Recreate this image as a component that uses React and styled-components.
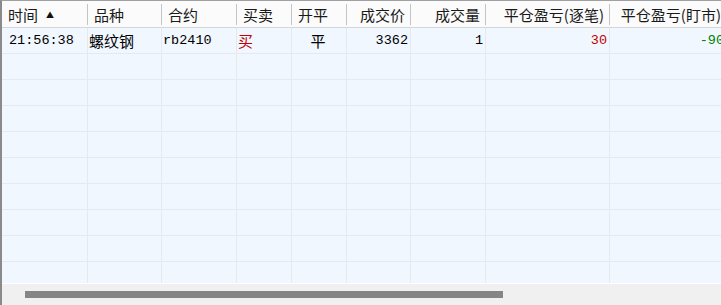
import styled, { createGlobalStyle } from 'styled-components';

const GlobalStyle = createGlobalStyle`
  html, body {
    margin: 0;
    padding: 0;
    background: #ffffff;
  }
  body {
    font-family: "Noto Sans CJK SC", "Noto Sans", sans-serif;
  }
`;

const columns = [
  { key: 'time', title: '时间', width: 86, headAlign: 'left', cellAlign: 'left', pad: 7, sorted: true },
  { key: 'name', title: '品种', width: 74, headAlign: 'left', cellAlign: 'left', pad: 1 },
  { key: 'code', title: '合约', width: 75, headAlign: 'left', cellAlign: 'left', pad: 1 },
  { key: 'side', title: '买卖', width: 55, headAlign: 'left', cellAlign: 'left', pad: 1 },
  { key: 'open', title: '开平', width: 55, headAlign: 'left', cellAlign: 'center', pad: 0 },
  { key: 'price', title: '成交价', width: 64, headAlign: 'right', cellAlign: 'right', pad: 0 },
  { key: 'qty', title: '成交量', width: 75, headAlign: 'right', cellAlign: 'right', pad: 0 },
  { key: 'pnl', title: '平仓盈亏(逐笔)', width: 124, headAlign: 'right', cellAlign: 'right', pad: 0 },
  { key: 'pnlDay', title: '平仓盈亏(盯市)', width: 117, headAlign: 'right', cellAlign: 'right', pad: 0 },
];

const trades = [
  {
    time: '21:56:38',
    name: '螺纹钢',
    code: 'rb2410',
    side: '买',
    open: '平',
    price: '3362',
    qty: '1',
    pnl: '30',
    pnlDay: '-90',
  },
];

const EMPTY_ROWS = 9;

const toneOf = (key, value) => {
  if (key === 'side') return value === '买' ? 'up' : 'down';
  if (key === 'pnl' || key === 'pnlDay') {
    const n = Number(value);
    if (n > 0) return 'up';
    if (n < 0) return 'down';
  }
  return 'plain';
};

const isLatin = (key) => ['time', 'code', 'price', 'qty', 'pnl', 'pnlDay'].includes(key);

export default function App() {
  return (
    <>
      <GlobalStyle />
      <Frame>
        <Grid>
          <HeaderRow>
            {columns.map((col) => (
              <HeadCell key={col.key} $width={col.width} $align={col.headAlign}>
                {col.title}
                {col.sorted && <SortMark>▲</SortMark>}
              </HeadCell>
            ))}
          </HeaderRow>
          <Body>
            {trades.map((trade, i) => (
              <Row key={i}>
                {columns.map((col) => (
                  <Cell
                    key={col.key}
                    $width={col.width}
                    $align={col.cellAlign}
                    $pad={col.pad}
                    $tone={toneOf(col.key, trade[col.key])}
                    $latin={isLatin(col.key)}
                  >
                    {trade[col.key]}
                  </Cell>
                ))}
              </Row>
            ))}
            {Array.from({ length: EMPTY_ROWS }).map((_, i) => (
              <Row key={`e${i}`}>
                {columns.map((col) => (
                  <Cell key={col.key} $width={col.width} />
                ))}
              </Row>
            ))}
          </Body>
        </Grid>
        <ScrollBar>
          <Thumb />
        </ScrollBar>
      </Frame>
    </>
  );
}

const Frame = styled.div`
  width: 721px;
  height: 305px;
  display: flex;
  flex-direction: column;
  border-left: 2px solid #8a8a8a;
  border-top: 1px solid #a0a0a0;
  box-sizing: border-box;
  overflow: hidden;
  background: #f0f7ff;
`;

const Grid = styled.div`
  display: flex;
  flex-direction: column;
  height: 282px;
  overflow: hidden;
`;

const HeaderRow = styled.div`
  display: flex;
  height: 26px;
  flex: none;
  background: #fbfbfb;
  border-bottom: 1px solid #d6d6d6;
`;

const HeadCell = styled.div`
  flex: none;
  width: ${({ $width }) => $width}px;
  box-sizing: border-box;
  display: flex;
  align-items: center;
  justify-content: ${({ $align }) => ($align === 'right' ? 'flex-end' : 'flex-start')};
  padding: 0 6px 0 6px;
  font-size: 15px;
  color: #1a1a1a;
  white-space: nowrap;
  position: relative;
  &::after {
    content: '';
    position: absolute;
    right: 0;
    top: 3px;
    bottom: 2px;
    width: 1px;
    background: #c4c4c4;
  }
`;

const SortMark = styled.span`
  font-size: 8px;
  margin-left: 8px;
  color: #111;
`;

const Body = styled.div`
  display: flex;
  flex-direction: column;
  flex: 1;
  overflow: hidden;
`;

const Row = styled.div`
  display: flex;
  height: 26px;
  flex: none;
  box-sizing: border-box;
  border-bottom: 1px solid #e6eaf0;
`;

const Cell = styled.div`
  flex: none;
  width: ${({ $width }) => $width}px;
  box-sizing: border-box;
  border-right: 1px solid #e6eaf0;
  display: flex;
  align-items: center;
  justify-content: ${({ $align }) =>
    $align === 'right' ? 'flex-end' : $align === 'center' ? 'center' : 'flex-start'};
  padding: 0 2px 0 ${({ $pad = 0 }) => $pad}px;
  white-space: nowrap;
  font-family: ${({ $latin }) =>
    $latin ? '"Liberation Mono", monospace' : '"Noto Sans CJK SC", sans-serif'};
  font-size: ${({ $latin }) => ($latin ? '13.5px' : '15px')};
  font-weight: 400;
  color: ${({ $tone }) =>
    $tone === 'up' ? '#c40000' : $tone === 'down' ? '#008000' : '#000000'};
`;

const ScrollBar = styled.div`
  flex: 1;
  background: #f0f0f0;
  border-top: 1px solid #ffffff;
  display: flex;
  align-items: center;
  padding: 0 0 0 23px;
`;

const Thumb = styled.div`
  width: 478px;
  height: 7px;
  background: #858585;
`;
